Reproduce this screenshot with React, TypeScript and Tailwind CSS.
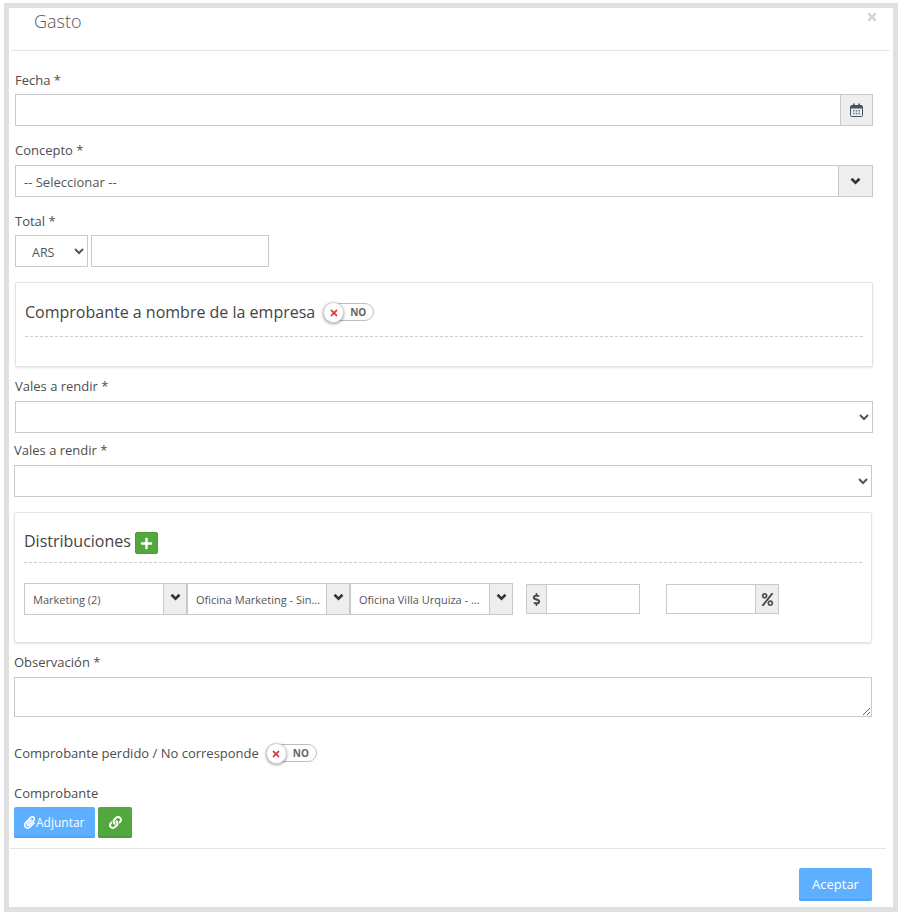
import {FaDollarSign, FaLink, FaPaperclip, FaPercent, FaPlus, FaTimes} from 'react-icons/fa';

const BORDER = 'border border-[#c9c9c9]';

function Label({text, className = ''}: {text: string; className?: string}) {
  return <div className={`h-5 text-[13px] leading-5 text-[#4d4d4d] ${className}`}>{text}</div>;
}

function Addon({children, className = ''}: {children: React.ReactNode; className?: string}) {
  return (
    <div className={`flex shrink-0 items-center justify-center bg-[#eeeeee] ${BORDER} ${className}`}>
      {children}
    </div>
  );
}

function Toggle({className = 'ml-2'}: {className?: string}) {
  return (
    <div className={`relative flex h-[18px] w-[51px] items-center justify-end rounded-full border border-[#bdbdbd] bg-white pr-[7px] ${className}`}>
      <span className="text-[10px] leading-none font-bold text-[#666666]">NO</span>
      <span className="absolute -top-[2px] -left-px flex h-[21px] w-[21px] items-center justify-center rounded-full border border-[#d5d5d5] bg-white shadow-[0_1px_3px_rgba(0,0,0,0.4)]">
        <FaTimes className="text-[10px] text-[#e23b3b]" />
      </span>
    </div>
  );
}

function CalendarIcon() {
  return (
    <svg width="13" height="14" viewBox="0 0 13 14" aria-hidden="true">
      <rect x="0.5" y="2.5" width="12" height="11" rx="1" fill="#e9edef" stroke="#47525c" />
      <rect x="1" y="3" width="11" height="2.5" fill="#47525c" />
      <rect x="3" y="0.5" width="1.6" height="3" fill="#47525c" />
      <rect x="8.4" y="0.5" width="1.6" height="3" fill="#47525c" />
      <path d="M3 7h1.5v1.5H3zM5.75 7h1.5v1.5h-1.5zM8.5 7H10v1.5H8.5zM3 9.7h1.5v1.5H3zM5.75 9.7h1.5v1.5h-1.5zM8.5 9.7H10v1.5H8.5z" fill="#6b7680" />
    </svg>
  );
}

// the heavy little chevron of the old icon font, lucide and fa ones are too thin
function Chevron({className = ''}: {className?: string}) {
  return (
    <svg width="11" height="8" viewBox="0 0 11 8" className={className} aria-hidden="true">
      <polyline points="1.5,1.8 5.5,5.6 9.5,1.8" fill="none" stroke="#333333" strokeWidth="2.6" />
    </svg>
  );
}

/* select2 style box with grey chevron button */
function FakeSelect({text}: {text: string}) {
  return (
    <div className={`flex h-8 w-[163px] bg-white ${BORDER}`}>
      <div className="flex-1 truncate pl-2 text-[11px] leading-8 text-[#555555]">{text}</div>
      <div className="flex w-[23px] items-center justify-center border-l border-[#c9c9c9] bg-[#eeeeee]">
        <Chevron className="mb-1" />
      </div>
    </div>
  );
}

export default function App() {
  return (
    <div className="pt-[3px] pl-1 font-['Open_Sans',sans-serif]">
      <div className="relative box-border h-[909px] w-[894px] border-[5px] border-[#e0e0e0] bg-white">
        {/* header */}
        <div className="mr-[3px] ml-[2px] h-[43px] border-b border-[#e5e5e5] pt-px pl-[23px] text-[18px] leading-6 font-light text-[#555555]">
          Gasto
        </div>
        <FaTimes className="absolute top-[3px] right-[15px] text-[12px] text-[#cfcfcf]" />

        {/* top half of the form */}
        <div className="ml-[6px] w-[858px]">
          <Label text="Fecha *" className="mt-[19px] mb-1" />
          <div className="flex h-8">
            <input className={`min-w-0 flex-1 border-r-0 bg-white ${BORDER}`} />
            <Addon className="w-[33px]">
              <CalendarIcon />
            </Addon>
          </div>

          <Label text="Concepto *" className="mt-[14px] mb-[5px]" />
          <div className="flex h-8">
            <div className={`flex-1 border-r-0 bg-white pl-2 text-[13px] leading-8 text-[#555555] ${BORDER}`}>
              -- Seleccionar --
            </div>
            <Addon className="w-[35px]">
              <Chevron />
            </Addon>
          </div>

          <Label text="Total *" className="mt-[14px] mb-1" />
          <div className="flex h-8 gap-[3px]">
            <select className={`h-8 w-[73px] bg-white pt-[2px] pl-3 text-[12.5px] text-[#555555] ${BORDER}`}>
              <option>ARS</option>
            </select>
            <input className={`h-8 w-[178px] bg-white ${BORDER}`} />
          </div>

          <div className="mt-[15px] h-[85px] rounded-[2px] border border-[#e4e4e4] px-[9px] pt-[18px] shadow-[0_1px_2px_rgba(0,0,0,0.1)]">
            <div className="flex h-[22px] items-center text-[16px] text-[#444444]">
              Comprobante a nombre de la empresa
              <Toggle />
            </div>
            <div className="mt-[13px] border-t border-dashed border-[#cccccc]" />
          </div>

          <Label text="Vales a rendir *" className="mt-[9px] mb-[5px]" />
          <select className={`block h-8 w-full bg-white text-[#555555] ${BORDER}`} />
        </div>

        {/* lower half sits one pixel further left */}
        <div className="ml-[5px] w-[858px]">
          <Label text="Vales a rendir *" className="mt-[7px] mb-[5px]" />
          <select className={`block h-8 w-full bg-white text-[#555555] ${BORDER}`} />

          <div className="mt-[15px] h-[131px] rounded-[2px] border border-[#e4e4e4] px-[9px] pt-[19px] shadow-[0_1px_2px_rgba(0,0,0,0.1)]">
            <div className="flex h-[22px] items-center gap-1">
              <span className="mb-1 text-[16px] leading-[22px] text-[#444444]">Distribuciones</span>
              <button className="flex h-[22px] w-[23px] items-center justify-center rounded-[2px] border border-[#4b9c38] bg-[#52a83f] text-white">
                <FaPlus className="text-[13px]" />
              </button>
            </div>
            <div className="mt-2 border-t border-dashed border-[#cccccc]" />
            <div className="mt-5 flex items-center">
              <FakeSelect text="Marketing (2)" />
              <FakeSelect text="Oficina Marketing - Sin..." />
              <FakeSelect text="Oficina Villa Urquiza - ..." />
              <Addon className="ml-[13px] h-[30px] w-5 border-r-0">
                <FaDollarSign className="text-[13px] text-[#4a4a4a]" />
              </Addon>
              <input className={`h-[30px] w-[94px] bg-white ${BORDER}`} />
              <input className={`ml-[26px] h-[30px] w-[89px] border-r-0 bg-white ${BORDER}`} />
              <Addon className="h-[30px] w-6">
                <FaPercent className="text-[13px] text-[#4a4a4a]" />
              </Addon>
            </div>
          </div>

          <Label text="Observación *" className="mt-[9px] mb-[5px]" />
          <textarea className={`block h-10 w-full bg-white ${BORDER}`} />

          <div className="mt-[27px] flex h-[18px] items-center text-[13px] leading-5 text-[#4d4d4d]">
            Comprobante perdido / No corresponde
            <Toggle className="ml-[7px]" />
          </div>

          <Label text="Comprobante" className="mt-[21px] mb-1" />
          <div className="flex gap-[3px]">
            <button className="flex h-[31px] w-[81px] items-center justify-start rounded-[2px] bg-[#5cb0ff] pl-[9px] text-[12px] text-white shadow-[inset_0_-2px_0_#52a5f5]">
              <FaPaperclip className="text-[13px]" />
              Adjuntar
            </button>
            <button className="flex h-[31px] w-[34px] items-center justify-center rounded-[2px] bg-[#52a83f] text-white shadow-[inset_0_-2px_0_#4b9c38]">
              <FaLink className="text-[13px]" />
            </button>
          </div>
        </div>

        <div className="mt-[10px] ml-px w-[876px] border-t border-[#e5e5e5]" />
        <div className="mt-[19px] flex w-[863px] justify-end">
          <button className="h-[33px] w-[73px] rounded-[2px] bg-[#5cb0ff] text-[13px] text-white shadow-[inset_0_-2px_0_#52a5f5]">
            Aceptar
          </button>
        </div>
      </div>
    </div>
  );
}
